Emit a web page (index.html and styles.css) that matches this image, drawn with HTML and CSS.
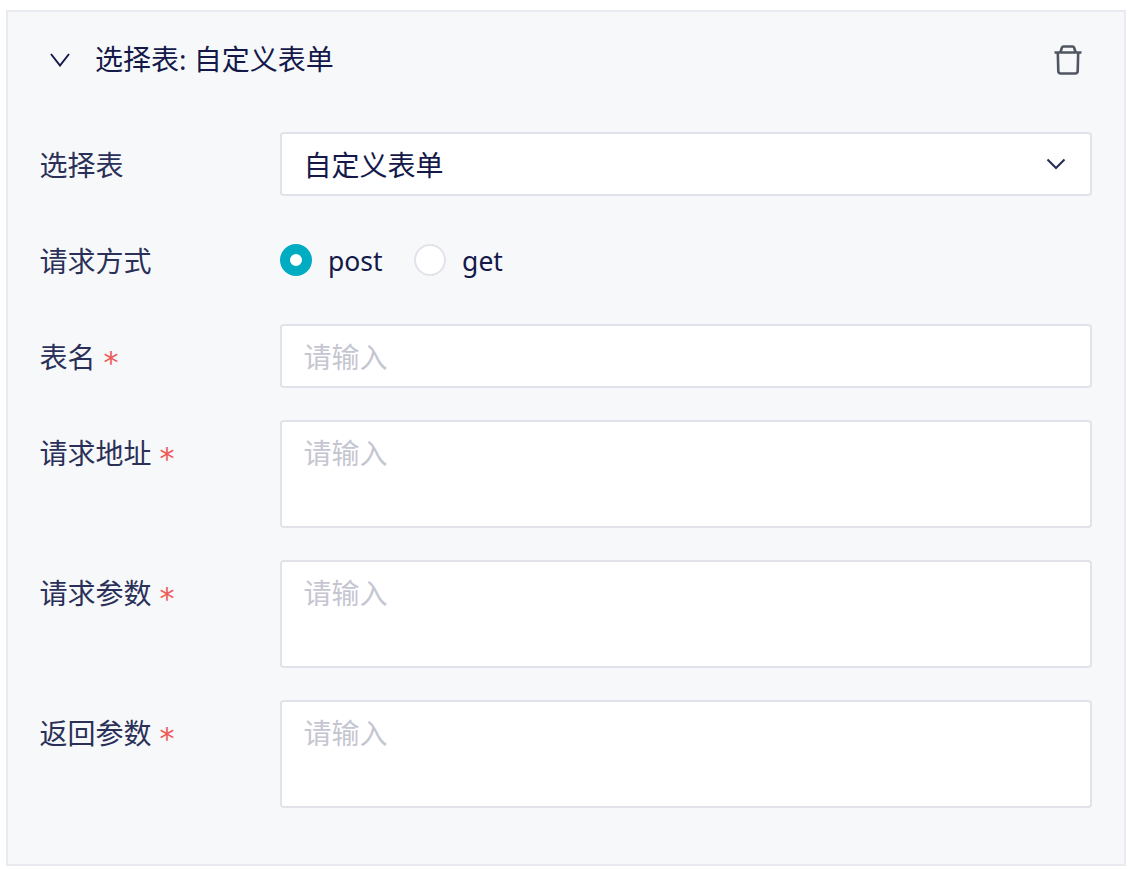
FILE: index.html
```html
<!DOCTYPE html>
<html lang="zh-CN">
<head>
<meta charset="UTF-8">
<meta name="viewport" content="width=device-width, initial-scale=1.0">
<title>选择表</title>
<link rel="stylesheet" href="styles.css">
</head>
<body>
    <div class="panel">
        <div class="panel-head">
            <svg class="arrow" width="20" height="14" viewBox="0 0 20 14"><path d="M1 1 L10 12.500 L19 1" fill="none" stroke="#14194a" stroke-width="2"/></svg>
            <span class="panel-title">选择表: 自定义表单</span>
            <svg class="trash" width="28" height="30" viewBox="0 0 28 30"><path d="M0.500 7.500 H27.500 M3.800 7.500 L4.300 26 Q4.400 28.500 6.800 28.500 H21.200 Q23.600 28.500 23.700 26 L24.200 7.500 M6.500 7 L7.800 2.800 Q8.200 1.500 9.500 1.500 H18.500 Q19.800 1.500 20.200 2.800 L21.500 7" fill="none" stroke="#505661" stroke-width="2.600"/></svg>
        </div>
        <div class="form">
            <div class="row">
                <label class="label">选择表</label>
                <div class="select">
                    <span class="select-text">自定义表单</span>
                    <svg width="20" height="12" viewBox="0 0 20 12"><path d="M1.500 1.500 L10 10 L18.500 1.500" fill="none" stroke="#262c57" stroke-width="2"/></svg>
                </div>
            </div>
            <div class="row">
                <label class="label">请求方式</label>
                <div class="radios">
                    <span class="radio on"></span><span class="radio-text">post</span>
                    <span class="radio"></span><span class="radio-text">get</span>
                </div>
            </div>
            <div class="row">
                <label class="label">表名<span class="req">*</span></label>
                <div class="input">请输入</div>
            </div>
            <div class="row">
                <label class="label">请求地址<span class="req">*</span></label>
                <div class="input textarea">请输入</div>
            </div>
            <div class="row">
                <label class="label">请求参数<span class="req">*</span></label>
                <div class="input textarea">请输入</div>
            </div>
            <div class="row">
                <label class="label">返回参数<span class="req">*</span></label>
                <div class="input textarea">请输入</div>
            </div>
        </div>
    </div>
</body>
</html>
```

FILE: styles.css
```css
body {
    margin: 0;
    padding: 0;
    background-color: #fff;
    font-family: "Noto Sans", "Noto Sans CJK SC", sans-serif;
    font-size: 28px;
}
.panel {
    width: 1120px;
    height: 856px;
    margin: 10px 0 0 6px;
    box-sizing: border-box;
    background-color: #f7f8fa;
    border: 2px solid #e9ebf0;
}
.panel-head {
    display: flex;
    align-items: center;
    height: 96px;
    padding: 0 42px;
    color: #14194a;
}
.arrow {
    margin-right: 25px;
}
.panel-title {
    flex: 1;
    line-height: 38px;
    margin-bottom: 2px;
}
.form {
    display: flex;
    flex-direction: column;
    gap: 32px;
    padding: 24px 31px 0 31.500px;
}
.row {
    display: flex;
}
.label {
    width: 240.500px;
    height: 64px;
    line-height: 66px;
    color: #2a3058;
}
.req {
    margin-left: 8px;
    font-family: "DejaVu Sans", sans-serif;
    font-size: 30px;
    line-height: 0;
    vertical-align: -5px;
    color: #ee5d5d;
}
.select, .input {
    box-sizing: border-box;
    width: 812px;
    height: 64px;
    padding: 0 21.500px;
    line-height: 62px;
    background-color: #fff;
    border: 2px solid #e1e2ea;
    border-radius: 4px;
}
.select {
    display: flex;
    align-items: center;
    justify-content: space-between;
    padding-right: 24px;
    color: #14194a;
}
.select-text {
    padding-top: 2px;
}
.input {
    color: #c5c6d2;
}
.textarea {
    height: 108px;
}
.radios {
    display: flex;
    align-items: center;
    height: 64px;
    color: #14194a;
    font-size: 26.500px;
}
.radio {
    box-sizing: border-box;
    width: 32px;
    height: 32px;
    margin-right: 16px;
    background-color: #fff;
    border: 2px solid #e1e2ea;
    border-radius: 50%;
}
.radio.on {
    background-color: #fff;
    border: 10px solid #00acc1;
}
.radio-text {
    margin-right: 31.500px;
    padding-top: 2px;
}
```
